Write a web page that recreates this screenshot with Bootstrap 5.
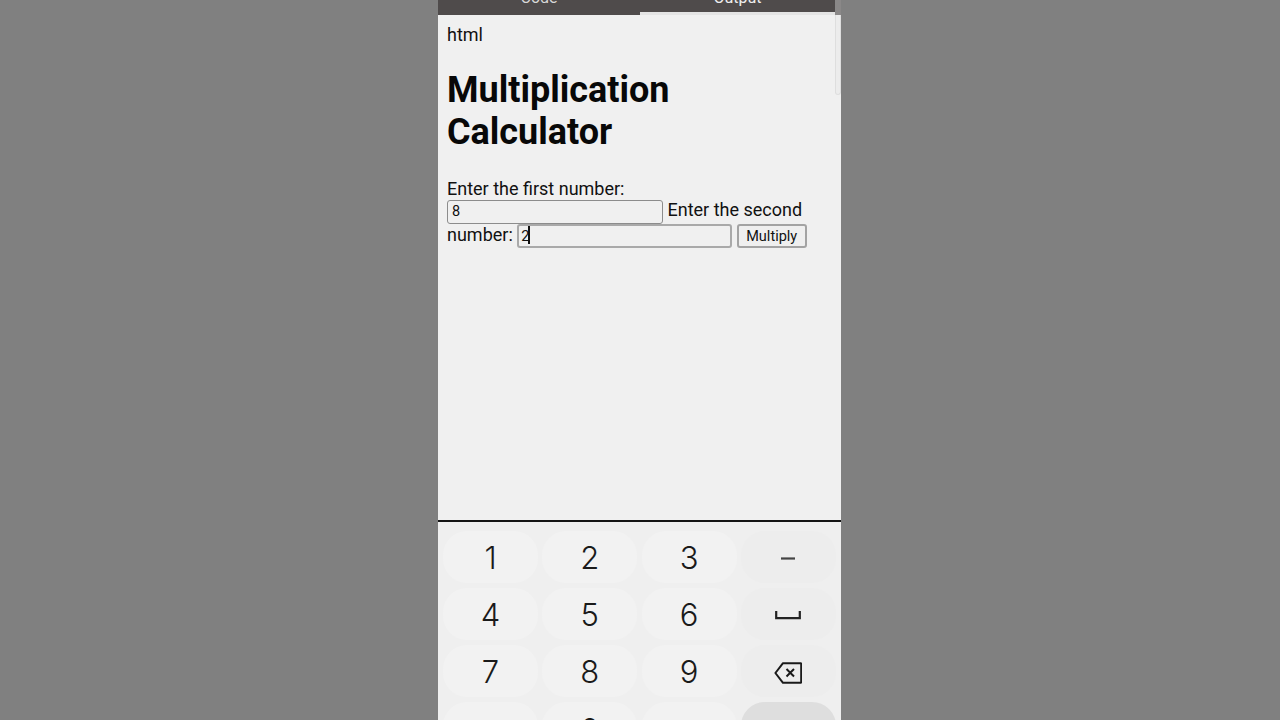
<!DOCTYPE html>
<html lang="en">
<head>
<meta charset="utf-8">
<title>Multiplication Calculator</title>
<link rel="stylesheet" href="https://cdn.jsdelivr.net/npm/bootstrap@5.3.0/dist/css/bootstrap.min.css">
<style>
html,body{height:720px;overflow:hidden}
body{background:#808080;font-family:Roboto,"Liberation Sans",sans-serif;color:#111}
.phone{width:403px;height:720px;margin-left:438px;background:#f0f0f0;overflow:hidden;position:relative}
.tabbar{height:15px;width:397px;background:#4f4b4b;overflow:hidden}
.tabitem{flex:1 1 0;height:15px;text-align:center;color:#d8d8d8;font-size:16px;line-height:20px;margin:0;border-bottom:3px solid transparent}
.tabitem:first-child{flex:0 0 202px}
.tabitem span{display:block;margin-top:-12px}
.tabitem.on{border-bottom-color:#e4e4e4;color:#eee}
.pagebody{height:505px;padding:8px 9px 0;font-size:18px;line-height:22px;color:#111}
.pagebody p{margin:0 0 23px;font-size:18px;line-height:23px}
.pagebody h1{font-family:Roboto,sans-serif;font-weight:700;font-size:36px;line-height:42px;margin:0 0 25px;color:#080808}
.calcform{font-size:18px;line-height:21px;width:380px}
.numfield{width:216px;height:24px;padding:1px 4px;font:14.5px Roboto,sans-serif;background:#f0f0f0;color:#111;border:1px solid #8c8c8c;border-radius:3px;vertical-align:baseline;outline:0}
.numfield.active{width:215px;border:2px solid #a9a9a9;padding:1px 2px}
.calcbtn{width:70px;height:24px;padding:0;font:14.5px Roboto,sans-serif;color:#111;background:#efefef;border:2px solid #a3a3a3;border-radius:3px;vertical-align:baseline}
.caretline{position:absolute;left:90px;top:226px;width:2px;height:18px;background:#111}
.scrollthumb{position:absolute;right:0;top:15px;width:6px;height:80px;background:#ececec;border:1px solid #dedede;border-top:0;border-radius:0 0 3px 3px}
.scrolltop{position:absolute;right:0;top:0;width:6px;height:15px;background:#8a8888}
.keyboard{border-top:2px solid #141414;height:200px;background:#efefef;padding:9px 5px 0;display:grid;grid-template-columns:repeat(4,95px);column-gap:4.3px;grid-auto-rows:52px;row-gap:5px}
.keycap{background:#f2f2f2;border-radius:24px;display:flex;align-items:center;justify-content:center;font-family:Inter,Roboto,sans-serif;font-size:31px;font-weight:300;color:#1a1a1a;line-height:1}
.keycap.side{background:#ededed}
.keycap.wide{background:#dedede}
.keycap svg{margin-top:3px}
.zerokey span{display:block;margin-top:2px}
</style>
</head>
<body>
<div class="phone">
  <div class="tabbar d-flex">
    <div class="tabitem"><span>Code</span></div>
    <div class="tabitem on"><span>Output</span></div>
  </div>
  <div class="scrolltop"></div>
  <div class="scrollthumb"></div>
  <div class="pagebody">
    <p>html</p>
    <h1>Multiplication Calculator</h1>
    <div class="calcform">
      Enter the first number:
      <input class="numfield" type="text" value="8" aria-label="First number"> Enter the second number:
      <input class="numfield active" type="text" value="2" aria-label="Second number">
      <button class="calcbtn" type="button">Multiply</button>
    </div>
  </div>
  <div class="caretline"></div>
  <div class="keyboard">
    <div class="keycap">1</div><div class="keycap">2</div><div class="keycap">3</div>
    <div class="keycap side"><svg width="14" height="3" viewBox="0 0 14 3"><rect width="14" height="2.2" y=".4" fill="#444"/></svg></div>
    <div class="keycap">4</div><div class="keycap">5</div><div class="keycap">6</div>
    <div class="keycap side"><svg width="26" height="9" viewBox="0 0 26 9"><path d="M1.2 0v7.2h23.6V0" fill="none" stroke="#222" stroke-width="2.2"/></svg></div>
    <div class="keycap">7</div><div class="keycap">8</div><div class="keycap">9</div>
    <div class="keycap side"><svg width="28" height="22" viewBox="0 0 28 22"><path d="M9 1.2h17.6a.8.8 0 0 1 .6.8v18a.8.8 0 0 1-.6.8H9L1.4 11z" fill="none" stroke="#1a1a1a" stroke-width="2" stroke-linejoin="round"/><path d="M12.5 7l7.5 7.5M20 7l-7.5 7.5" stroke="#1a1a1a" stroke-width="2"/></svg></div>
    <div class="keycap"></div><div class="keycap zerokey"><span>0</span></div><div class="keycap"></div><div class="keycap wide"></div>
  </div>
</div>
<script src="https://cdn.jsdelivr.net/npm/bootstrap@5.3.0/dist/js/bootstrap.bundle.min.js"></script>
</body>
</html>
